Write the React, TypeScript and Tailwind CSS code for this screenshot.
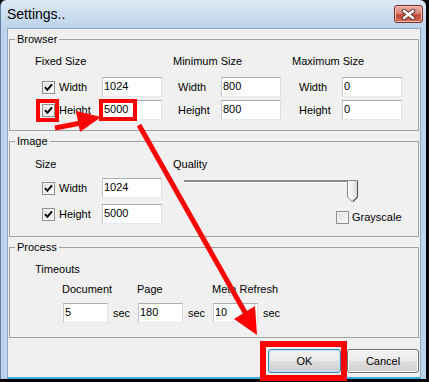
import React from 'react';

function Check({ checked }: { checked?: boolean }) {
  return (
    <span className="w-[13px] h-[13px] shrink-0 border border-[#8e8f8f] bg-[linear-gradient(135deg,#dcdcdc,#ffffff)] flex items-center justify-center shadow-[inset_0_0_0_1px_#f4f4f4]">
      {checked && (
        <svg width="9" height="9" viewBox="0 0 9 9">
          <path d="M1 4.2 L3.4 6.8 L8 1.4" fill="none" stroke="#000" strokeWidth="1.9" />
        </svg>
      )}
    </span>
  );
}

function Box({ value, className }: { value: string; className: string }) {
  return (
    <div
      className={
        'h-[20px] bg-white border border-t-[#abadb3] border-l-[#c5c8cf] border-r-[#dbdfe6] border-b-[#e3e9ef] pl-[1px] leading-[16px] ' +
        className
      }
    >
      {value}
    </div>
  );
}

function Row({ check, label, value }: { check?: 'on' | 'off'; label: string; value: string }) {
  return (
    <div className="flex items-center">
      {check && (
        <>
          <Check checked={check === 'on'} />
          <span className="w-[4px]" />
        </>
      )}
      <span className="w-[43px]">{label}</span>
      <Box value={value} className="w-[60px]" />
    </div>
  );
}

function Btn({ label, def }: { label: string; def?: boolean }) {
  return (
    <div
      className={
        'h-[24px] rounded-[3px] border flex items-center justify-center bg-[linear-gradient(#f2f2f2_0%,#ebebeb_48%,#dddddd_52%,#cfcfcf_100%)] ' +
        (def
          ? 'w-[73px] border-[#3c7fb1] shadow-[inset_0_0_0_1px_#bfe6f8]'
          : 'w-[72px] border-[#707070] shadow-[inset_0_0_0_1px_#fcfcfc]')
      }
    >
      {label}
    </div>
  );
}

export default function App() {
  return (
    <div className="relative w-[429px] h-[382px] bg-black overflow-hidden font-['Liberation_Sans',Arial,sans-serif] text-[11px] text-black">
      <div className="w-[426px] h-[379px] flex flex-col rounded-t-[6px] border-l border-[#5b7fa6] bg-[linear-gradient(to_bottom,#dde9f5,#bdd3eb_28px,#bdd3eb)]">
        {/* title bar */}
        <div className="h-[28px] shrink-0 flex justify-between pl-[6px] pr-[3px]">
          <span className="text-[14px] leading-[28px]">Settings..</span>
          <div className="mt-[5px] w-[29px] h-[18px] rounded-[3px] border border-[#7a2b22] bg-[linear-gradient(#eab0a4_0%,#d88878_45%,#c4483a_55%,#cf6a52_100%)] flex items-center justify-center shadow-[inset_0_0_0_1px_#f0c2b8]">
            <svg width="15" height="11" viewBox="0 0 15 11">
              <path d="M3 2 L12 9 M12 2 L3 9" stroke="#5a2a26" strokeWidth="4.4" strokeLinecap="round" />
              <path d="M3 2 L12 9 M12 2 L3 9" stroke="#ffffff" strokeWidth="2.6" strokeLinecap="round" />
            </svg>
          </div>
        </div>

        {/* client area */}
        <div className="flex-1 ml-[6px] mr-[5px] bg-[#f0f0f0] border border-[#8fa7c2] border-b-2 border-b-[#3fa8de] px-[1px] flex flex-col">
          <fieldset className="h-[99px] mt-[3px] border border-[#a0a0a0] p-0 m-0 min-w-0">
            <legend className="ml-[5px] px-[2px] leading-[14px]">Browser</legend>
            <div className="flex pl-[25px] pt-[8px]">
              <div className="w-[138px]">
                <div className="leading-[14px]">Fixed Size</div>
                <div className="mt-[9px] flex flex-col gap-[3px] pl-[7px]">
                  <Row check="on" label="Width" value="1024" />
                  <Row check="on" label="Height" value="5000" />
                </div>
              </div>
              <div className="w-[119px]">
                <div className="leading-[14px]">Minimum Size</div>
                <div className="mt-[9px] flex flex-col gap-[3px] pl-[5px]">
                  <Row label="Width" value="800" />
                  <Row label="Height" value="800" />
                </div>
              </div>
              <div>
                <div className="leading-[14px]">Maximum Size</div>
                <div className="mt-[9px] flex flex-col gap-[3px] pl-[7px]">
                  <Row label="Width" value="0" />
                  <Row label="Height" value="0" />
                </div>
              </div>
            </div>
          </fieldset>

          <fieldset className="h-[103px] mt-[3px] border border-[#a0a0a0] p-0 m-0 min-w-0">
            <legend className="ml-[5px] px-[2px] leading-[14px]">Image</legend>
            <div className="flex pl-[25px] pt-[9px]">
              <div className="w-[138px]">
                <div className="leading-[14px]">Size</div>
                <div className="mt-[7px] flex flex-col gap-[6px] pl-[7px]">
                  <Row check="on" label="Width" value="1024" />
                  <Row check="on" label="Height" value="5000" />
                </div>
              </div>
              <div className="flex-1">
                <div className="leading-[14px]">Quality</div>
                <div className="relative mt-[9px] ml-[11px] w-[175px] h-[22px]">
                  <div className="mt-[8px] w-[168px] h-[3px] bg-[#8c8c8c] border-b border-white" />
                  <svg className="absolute right-0 top-0" width="12" height="23" viewBox="0 0 12 23">
                    <defs>
                      <linearGradient id="th" x1="0" x2="1" y1="0" y2="0">
                        <stop offset="0" stopColor="#ffffff" />
                        <stop offset="1" stopColor="#dcdcdc" />
                      </linearGradient>
                    </defs>
                    <path d="M0.5 0.5 H10.5 V17 L5.5 22 L0.5 17 Z" fill="url(#th)" stroke="#8a8a8a" />
                    <path d="M10.5 1 V17 L6 21.5" fill="none" stroke="#5e5e5e" strokeWidth="1.2" />
                  </svg>
                </div>
                <div className="mt-[7px] ml-[163px] flex items-center">
                  <Check />
                  <span className="ml-[3px]">Grayscale</span>
                </div>
              </div>
            </div>
          </fieldset>

          <fieldset className="h-[98px] mt-[3px] border border-[#a0a0a0] p-0 m-0 min-w-0">
            <legend className="ml-[5px] px-[2px] leading-[14px]">Process</legend>
            <div className="pl-[25px] pt-[8px]">
              <div className="leading-[14px]">Timeouts</div>
              <div className="flex ml-[27px] mt-[6px]">
                {[
                  ['Document', '5'],
                  ['Page', '180'],
                  ['Meta Refresh', '10'],
                ].map(([label, value]) => (
                  <div key={label} className="w-[75px]">
                    <div className="leading-[14px] whitespace-nowrap">{label}</div>
                    <div className="mt-[7px] flex items-center">
                      <Box value={value} className="ml-[1px] w-[45px]" />
                      <span className="ml-[5px]">sec</span>
                    </div>
                  </div>
                ))}
              </div>
            </div>
          </fieldset>

          <div className="flex justify-end gap-[6px] mt-[11px]">
            <Btn label="OK" def />
            <Btn label="Cancel" />
          </div>
        </div>
      </div>

      {/* red annotations drawn on top of the dialog */}
      <svg className="absolute inset-0 pointer-events-none" width="429" height="382" viewBox="0 0 429 382">
        <rect x="38" y="101" width="19" height="19" fill="none" stroke="#ff0000" strokeWidth="4" />
        <rect x="101" y="101" width="34" height="18" fill="none" stroke="#ff0000" strokeWidth="4" />
        <rect x="263" y="344" width="81" height="34" fill="none" stroke="#ff0000" strokeWidth="6" />
        <path d="M55 128 L81 123" stroke="#ff0000" strokeWidth="5" />
        <polygon points="76,111 80,132 101,117" fill="#ff0000" />
        <path d="M139 125 L247 316" stroke="#ff0000" strokeWidth="5" />
        <polygon points="234,319 255,306 257,335" fill="#ff0000" />
      </svg>
    </div>
  );
}
